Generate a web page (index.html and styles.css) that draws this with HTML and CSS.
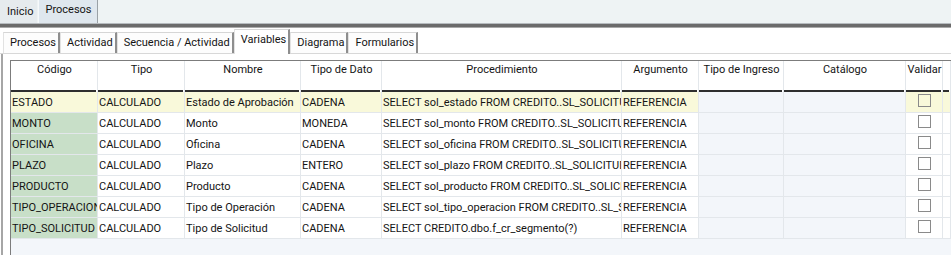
FILE: index.html
```html
<!doctype html>
<html lang="es">

<head>
    <meta charset="UTF-8" />
    <title>Procesos - Variables</title>
    <link rel="stylesheet" href="styles.css">
</head>

<body>
    <!-- Main tabs -->
    <div class="topbar">
        <div class="top-tab">Inicio</div>
        <div class="top-tab is-active">Procesos</div>
    </div>
    <div class="topbar-rule"></div>

    <!-- Process sub tabs -->
    <div class="subtabs">
        <div class="sub-tab">Procesos</div>
        <div class="sub-tab">Actividad</div>
        <div class="sub-tab">Secuencia / Actividad</div>
        <div class="sub-tab is-active">Variables</div>
        <div class="sub-tab">Diagrama</div>
        <div class="sub-tab">Formularios</div>
    </div>

    <!-- Variables grid -->
    <div class="panel">
        <div class="grid">
            <div class="grid-row grid-head">
                <div class="cell">Código</div>
                <div class="cell">Tipo</div>
                <div class="cell">Nombre</div>
                <div class="cell">Tipo de Dato</div>
                <div class="cell">Procedimiento</div>
                <div class="cell">Argumento</div>
                <div class="cell">Tipo de Ingreso</div>
                <div class="cell">Catálogo</div>
                <div class="cell">Validar</div>
                <div class="cell"></div>
            </div>

            <div class="grid-row is-selected">
                <div class="cell code">ESTADO</div>
                <div class="cell">CALCULADO</div>
                <div class="cell">Estado de Aprobación</div>
                <div class="cell">CADENA</div>
                <div class="cell">SELECT sol_estado FROM CREDITO..SL_SOLICITUD</div>
                <div class="cell">REFERENCIA</div>
                <div class="cell readonly"></div>
                <div class="cell readonly"></div>
                <div class="cell"><div class="check"></div></div>
                <div class="cell"></div>
            </div>

            <div class="grid-row">
                <div class="cell code">MONTO</div>
                <div class="cell">CALCULADO</div>
                <div class="cell">Monto</div>
                <div class="cell">MONEDA</div>
                <div class="cell">SELECT sol_monto FROM CREDITO..SL_SOLICITUD</div>
                <div class="cell">REFERENCIA</div>
                <div class="cell readonly"></div>
                <div class="cell readonly"></div>
                <div class="cell"><div class="check"></div></div>
                <div class="cell"></div>
            </div>

            <div class="grid-row">
                <div class="cell code">OFICINA</div>
                <div class="cell">CALCULADO</div>
                <div class="cell">Oficina</div>
                <div class="cell">CADENA</div>
                <div class="cell">SELECT sol_oficina FROM CREDITO..SL_SOLICITUD</div>
                <div class="cell">REFERENCIA</div>
                <div class="cell readonly"></div>
                <div class="cell readonly"></div>
                <div class="cell"><div class="check"></div></div>
                <div class="cell"></div>
            </div>

            <div class="grid-row">
                <div class="cell code">PLAZO</div>
                <div class="cell">CALCULADO</div>
                <div class="cell">Plazo</div>
                <div class="cell">ENTERO</div>
                <div class="cell">SELECT sol_plazo FROM CREDITO..SL_SOLICITUD</div>
                <div class="cell">REFERENCIA</div>
                <div class="cell readonly"></div>
                <div class="cell readonly"></div>
                <div class="cell"><div class="check"></div></div>
                <div class="cell"></div>
            </div>

            <div class="grid-row">
                <div class="cell code">PRODUCTO</div>
                <div class="cell">CALCULADO</div>
                <div class="cell">Producto</div>
                <div class="cell">CADENA</div>
                <div class="cell">SELECT sol_producto FROM CREDITO..SL_SOLICITUD</div>
                <div class="cell">REFERENCIA</div>
                <div class="cell readonly"></div>
                <div class="cell readonly"></div>
                <div class="cell"><div class="check"></div></div>
                <div class="cell"></div>
            </div>

            <div class="grid-row">
                <div class="cell code">TIPO_OPERACION</div>
                <div class="cell">CALCULADO</div>
                <div class="cell">Tipo de Operación</div>
                <div class="cell">CADENA</div>
                <div class="cell">SELECT sol_tipo_operacion FROM CREDITO..SL_SOLICITUD</div>
                <div class="cell">REFERENCIA</div>
                <div class="cell readonly"></div>
                <div class="cell readonly"></div>
                <div class="cell"><div class="check"></div></div>
                <div class="cell"></div>
            </div>

            <div class="grid-row">
                <div class="cell code">TIPO_SOLICITUD</div>
                <div class="cell">CALCULADO</div>
                <div class="cell">Tipo de Solicitud</div>
                <div class="cell">CADENA</div>
                <div class="cell">SELECT CREDITO.dbo.f_cr_segmento(?)</div>
                <div class="cell">REFERENCIA</div>
                <div class="cell readonly"></div>
                <div class="cell readonly"></div>
                <div class="cell"><div class="check"></div></div>
                <div class="cell"></div>
            </div>
        </div>
    </div>
</body>

</html>
```

FILE: styles.css
```css
body {
    margin: 0;
    width: 951px;
    height: 255px;
    overflow: hidden;
    background: #ffffff;
    color: #141414;
    font-family: 'Roboto', 'Liberation Sans', sans-serif;
    font-size: 11px;
}

/* Main tabs */
.topbar {
    display: flex;
    height: 24px;
    box-sizing: border-box;
    background: #eef3f4;
    border-bottom: 1px solid #b6bbbf;
}

.top-tab {
    padding: 5px 4px 0 7px;
    background: #e6ebee;
    line-height: 14px;
}

.top-tab.is-active {
    padding: 3px 5px 0 6px;
    margin-left: 1px;
    background: #dfe7ee;
    border-left: 1px solid #f6f9fb;
    border-right: 1px solid #9aa1a6;
}

.topbar-rule {
    height: 3px;
    background: #6b6b6b;
    border-bottom: 1px solid #a9a9a9;
}

/* Sub tabs */
.subtabs {
    display: flex;
    align-items: flex-end;
    height: 25px;
    padding-left: 3px;
    border-bottom: 1px solid #d8d8d8;
}

.sub-tab {
    height: 21px;
    box-sizing: border-box;
    padding: 3px 2px 0 6px;
    line-height: 14px;
    background: #fdfdfd;
    border-top: 1px solid #d6d6d6;
    border-left: 1px solid #e2e2e2;
    border-right: 2px solid #8e8e8e;
    white-space: nowrap;
}

.sub-tab.is-active {
    height: 25px;
    margin-bottom: -1px;
    padding-top: 3px;
    background: #ffffff;
}

/* Grid */
.panel {
    margin-left: 1px;
    border-left: 2px solid #a6a6a6;
    padding: 6px 0 0 7px;
    height: 200px;
}

.grid {
    height: 100%;
    border-top: 1px solid #7c7c7c;
    border-left: 1px solid #7c7c7c;
    background: #f3f6fa;
}

.grid-row {
    display: grid;
    grid-template-columns: 87px 87px 116px 81px 240px 77px 85px 122px 37px 1fr;
    height: 21px;
    box-sizing: border-box;
    border-bottom: 1px solid #e3e7eb;
    background: #ffffff;
}

.cell {
    padding: 2px 0 0 1px;
    border-right: 1px solid #e3e7eb;
    line-height: 18px;
    white-space: nowrap;
    overflow: hidden;
}

.grid-head {
    height: 31px;
    border-bottom: none;
}

.grid-head .cell {
    padding-top: 2px;
    line-height: 14px;
    text-align: center;
    background: linear-gradient(#2e2e2e, #2e2e2e) left bottom / calc(100% - 1px) 2px no-repeat;
}

.cell.code {
    background: #c8dfc8;
}

.cell.readonly {
    background: #f3f6fa;
}

.grid-row.is-selected {
    background: #f9f9da;
}

.grid-row.is-selected .cell.code {
    background: #f9f9da;
}

.check {
    width: 11px;
    height: 11px;
    margin: 0 auto;
    border: 1px solid #8a8a8a;
}
```
